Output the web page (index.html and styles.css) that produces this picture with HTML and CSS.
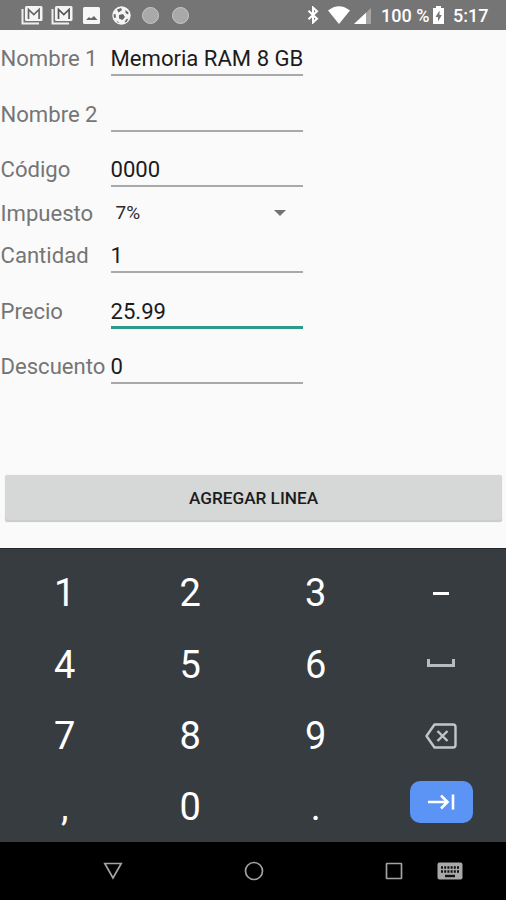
FILE: index.html
```
<!DOCTYPE html>
<html lang="es">
<head>
  <meta charset="UTF-8">
  <title>Agregar linea</title>
  <link rel="stylesheet" href="styles.css">
</head>

<body>
  <!-- Status bar -->
  <div class="status-bar">
    <div class="notifications">
      <svg width="22" height="20" viewBox="0 0 22 20">
        <path d="M1.500 4v14.500H18" fill="none" stroke="#eee" stroke-width="2"/>
        <rect x="4" y="1" width="17.500" height="15" rx="1.500" fill="#f4f4f4"/>
        <path d="M7.500 14V4.500l5.300 5 5.300-5V14" fill="none" stroke="#666" stroke-width="1.700"/>
      </svg>
      <svg width="22" height="20" viewBox="0 0 22 20">
        <path d="M1.500 4v14.500H18" fill="none" stroke="#eee" stroke-width="2"/>
        <rect x="4" y="1" width="17.500" height="15" rx="1.500" fill="#f4f4f4"/>
        <path d="M7.500 14V4.500l5.300 5 5.300-5V14" fill="none" stroke="#555" stroke-width="1.700"/>
      </svg>
      <svg class="picture" width="17" height="17" viewBox="0 0 17 17">
        <rect width="17" height="17" rx="1.500" fill="#f7f7f7"/>
        <path d="M3 13l3-3 2 1.500 3-2.500 3.500 4z" fill="#666"/>
      </svg>
      <svg class="ball" width="19" height="19" viewBox="0 0 19 19">
        <circle cx="9.500" cy="9.500" r="9.200" fill="#f4f4f4"/>
        <path d="M5 3.500l4-1.500 1 2-3.500 2.500zM13.500 4l3 2.500-.5 2-2.500-1.500zM7 9l4-1 2 3-2.500 3-3.500-1.500zM1.500 8.500l2-.5.500 3.500-2 .5zM14 13.500l2.500-1-2 3.500-2 .5zM4.500 14.500l2.500 2-1 .5z" fill="#666"/>
      </svg>
      <span class="dot"></span>
      <span class="dot"></span>
    </div>
    <div class="system">
      <svg width="12" height="18" viewBox="0 0 12 18">
        <path d="M1.500 4.800l8.500 8L6 16.500v-15l4 3.700-8.500 8" fill="none" stroke="#fff" stroke-width="2"/>
      </svg>
      <svg class="wifi" width="22" height="18" viewBox="0 0 22 18">
        <path d="M0 4.500Q11-4 22 4.500L11 18z" fill="#fff"/>
      </svg>
      <svg class="signal" width="17" height="16" viewBox="0 0 17 16">
        <path d="M17 0v16H0z" fill="#a5a5a5"/>
        <path d="M12 4.700V16H0z" fill="#fff"/>
      </svg>
      <span class="percent">100 %</span>
      <svg class="battery" width="11" height="18" viewBox="0 0 11 18">
        <path d="M3 0h5v2h3v16H0V2h3z" fill="#fff"/>
        <path d="M6.500 4.500L2.500 11H5v4.500L8.800 9H6.500z" fill="#757575"/>
      </svg>
      <span class="clock">5:17</span>
    </div>
  </div>

  <!-- Form -->
  <div class="form">
    <div class="row"><label>Nombre 1</label><div class="field">Memoria RAM 8 GB</div></div>
    <div class="row"><label>Nombre 2</label><div class="field"></div></div>
    <div class="row"><label>Código</label><div class="field">0000</div></div>
    <div class="row select"><label>Impuesto</label><div class="spinner">7%<span class="arrow"></span></div></div>
    <div class="row"><label>Cantidad</label><div class="field">1</div></div>
    <div class="row"><label>Precio</label><div class="field active">25.99</div></div>
    <div class="row"><label>Descuento</label><div class="field">0</div></div>
    <button class="add">AGREGAR LINEA</button>
  </div>

  <!-- Numeric keyboard -->
  <div class="keyboard">
    <div class="key">1</div>
    <div class="key">2</div>
    <div class="key">3</div>
    <div class="key"><span class="minus"></span></div>
    <div class="key">4</div>
    <div class="key">5</div>
    <div class="key">6</div>
    <div class="key"><span class="space"></span></div>
    <div class="key">7</div>
    <div class="key">8</div>
    <div class="key">9</div>
    <div class="key">
      <svg width="32" height="26" viewBox="0 0 32 26">
        <path d="M9.500 1.500H28q2.500 0 2.500 2.500v18q0 2.500-2.500 2.500H9.500L1.500 13z" fill="none" stroke="#c3c6c8" stroke-width="2.400" stroke-linejoin="round"/>
        <path d="M12.500 8l10 10M22.500 8l-10 10" stroke="#c3c6c8" stroke-width="2.400"/>
      </svg>
    </div>
    <div class="key">,</div>
    <div class="key">0</div>
    <div class="key">.</div>
    <div class="key">
      <div class="next">
        <svg width="28" height="18" viewBox="0 0 28 18">
          <path d="M1 9h20M14 2.500L20.500 9 14 15.500M26 1.500v15" fill="none" stroke="#fff" stroke-width="2.600"/>
        </svg>
      </div>
    </div>
  </div>

  <!-- Navigation bar -->
  <div class="nav-bar">
    <svg width="20" height="18" viewBox="0 0 20 18">
      <path d="M1.800 1.500h16.400L10 16z" fill="none" stroke="#a2a2a2" stroke-width="1.700"/>
    </svg>
    <svg class="home" width="20" height="20" viewBox="0 0 20 20">
      <circle cx="10" cy="10" r="8.500" fill="none" stroke="#a2a2a2" stroke-width="1.700"/>
    </svg>
    <svg class="recent" width="18" height="18" viewBox="0 0 18 18">
      <rect x="1.500" y="1.500" width="15" height="15" rx=".5" fill="none" stroke="#a2a2a2" stroke-width="1.700"/>
    </svg>
    <svg class="switch" width="26" height="18" viewBox="0 0 26 18">
      <rect x=".5" y=".5" width="25" height="17" rx="2" fill="#a8a8a8"/>
      <path d="M4 5.500h18M4 9.500h18" stroke="#111" stroke-width="2.400" stroke-dasharray="2 1.200"/>
      <path d="M8 14h10" stroke="#111" stroke-width="2.400"/>
    </svg>
  </div>
</body>
</html>
```
FILE: styles.css
```
* {
  box-sizing: border-box;
}

body {
  margin: 0;
  height: 900px;
  display: flex;
  flex-direction: column;
  background-color: #fafafa;
  font-family: Roboto, sans-serif;
  overflow: hidden;
}

svg {
  display: block;
  flex: none;
}

/* Status bar */
.status-bar {
  height: 30px;
  background-color: #757575;
  color: white;
  display: flex;
  justify-content: space-between;
  align-items: center;
  padding: 0 18px 0 21px;
}

.notifications, .system {
  display: flex;
  align-items: center;
}

.notifications svg + svg {
  margin-left: 8px;
}

.notifications .picture {
  margin-left: 10px;
}

.notifications svg + .ball {
  margin-left: 12px;
}

.dot {
  width: 17px;
  height: 17px;
  margin-left: 13px;
  border-radius: 50%;
  background-color: #a9a9a9;
  border: 1.5px solid #c8c8c8;
}

.ball + .dot {
  margin-left: 11px;
}

.wifi {
  margin-left: 9px;
}

.signal {
  margin-left: 4px;
  margin-top: 2px;
}

.percent, .clock {
  font-size: 18px;
  font-weight: 500;
  line-height: 30px;
  padding-top: 2px;
  white-space: nowrap;
}

.percent {
  width: 48px;
  margin-left: 10px;
}

.battery {
  margin-left: 4px;
}

.clock {
  width: 35px;
  margin-left: 9px;
}

/* Form */
.form {
  height: 518px;
}

.row {
  height: 55.5px;
  display: flex;
  font-size: 22.1px;
  line-height: 26px;
}

.row label {
  width: 110.5px;
  padding: 15px 0 0 0.5px;
  color: #757575;
  white-space: nowrap;
}

.field {
  width: 192.5px;
  height: 46px;
  padding-top: 15px;
  color: #1c1c1c;
  border-bottom: 2px solid #a9a9a9;
  white-space: nowrap;
}

.field.active {
  height: 46.5px;
  border-bottom: 3px solid #2a9a8b;
}

.row.select {
  height: 30.5px;
}

.select label {
  padding-top: 3px;
}

.spinner {
  width: 193px;
  display: flex;
  align-items: center;
  justify-content: space-between;
  padding: 3px 18px 0 5px;
  font-size: 19px;
  color: #2b2b2b;
}

.arrow {
  border: 6.5px solid transparent;
  border-top-color: #727272;
  border-bottom: 0;
}

.add {
  display: block;
  width: 497px;
  height: 47px;
  margin: 81px 0 0 5px;
  padding: 0;
  border: 0;
  border-radius: 3px;
  background-color: #d6d7d7;
  box-shadow: inset 0 -2px 1px #cbcccc, 0 0 1px #c5c5c5;
  font-family: inherit;
  font-size: 17.2px;
  font-weight: 500;
  color: #1c1c1c;
}

/* Keyboard */
.keyboard {
  height: 294px;
  padding: 8px 2px 0;
  background-color: #373c41;
  border-top: 1px solid #24282b;
  display: grid;
  grid-template-columns: repeat(4, 1fr);
  grid-template-rows: repeat(4, 71.4px);
}

.key {
  display: flex;
  align-items: center;
  justify-content: center;
  padding-top: 1px;
  font-size: 38px;
  color: white;
}

.minus {
  width: 16px;
  height: 3px;
  background-color: white;
}

.space {
  width: 28px;
  height: 8px;
  margin-bottom: 3px;
  border: 3px solid #b9bcbe;
  border-top: 0;
}

.next {
  width: 63px;
  height: 42px;
  margin-bottom: 11px;
  border-radius: 10px;
  background-color: #5b94f5;
  display: flex;
  align-items: center;
  justify-content: center;
}

/* Navigation bar */
.nav-bar {
  height: 58px;
  background-color: black;
  display: flex;
  align-items: center;
  padding-left: 103px;
}

.home {
  margin-left: 121px;
}

.recent {
  margin-left: 121px;
}

.switch {
  margin-left: 34px;
}
```
